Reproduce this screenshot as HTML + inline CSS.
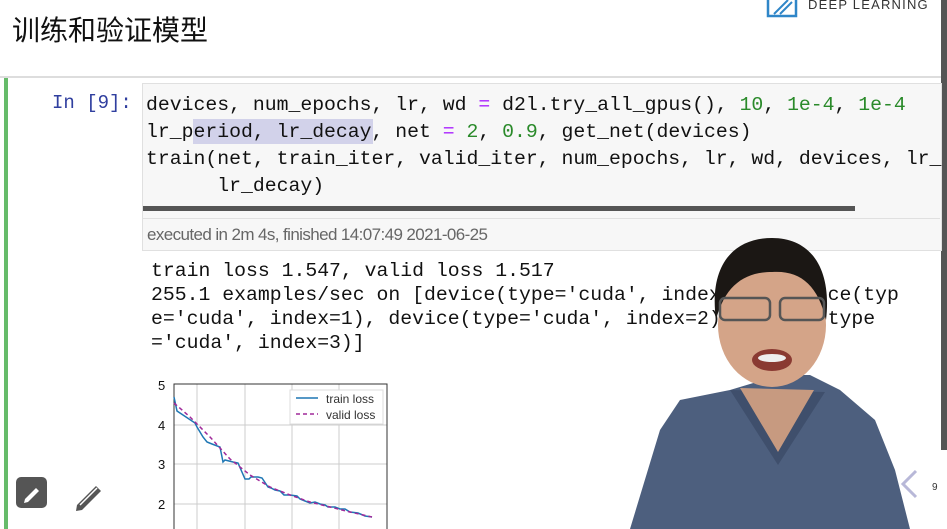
<!DOCTYPE html>
<html><head><meta charset="utf-8"><style>
body{margin:0;width:947px;height:529px;overflow:hidden;background:#fff;position:relative;font-family:"Liberation Sans","Noto Sans CJK SC",sans-serif}
.a{position:absolute}
.mono{font-family:"Liberation Mono",monospace;white-space:pre}
.code{font-size:19.8px;color:#111;line-height:27px}
.g{color:#2a8a2a}.p{color:#aa22ff}
.out{font-size:19.8px;color:#111;line-height:24px}
</style></head><body>
<div class="a" style="left:12px;top:9px;font-size:28px;color:#111;font-family:'Noto Sans CJK SC',sans-serif">训练和验证模型</div>
<svg class="a" style="left:766px;top:0" width="34" height="18"><rect x="2" y="-2" width="28" height="18" fill="none" stroke="#2f86c8" stroke-width="2.5"/><path d="M8 14 L22 0 M14 14 L26 2" stroke="#2f86c8" stroke-width="2"/></svg>
<div class="a" style="left:808px;top:-3px;font-size:13px;letter-spacing:1.2px;color:#333">DEEP LEARNING</div>
<div class="a" style="left:0;top:76px;width:942px;height:2px;background:#ddd"></div>
<div class="a" style="left:4px;top:78px;width:4px;height:451px;background:#66bb6a"></div>
<div class="a" style="left:941px;top:0;width:6px;height:450px;background:#555"></div>
<div class="a mono" style="left:52px;top:92px;font-size:19px;color:#303f9f">In [9]:</div>
<div class="a" style="left:142px;top:83px;width:798px;height:166px;background:#f7f7f7;border:1px solid #e0e0e0"></div>
<div class="a" style="left:193px;top:119px;width:180px;height:25px;background:#d2d2ea"></div>
<div class="a mono code" style="left:146px;top:92px">devices, num_epochs, lr, wd <span class="p">=</span> d2l.try_all_gpus(), <span class="g">10</span>, <span class="g">1e-4</span>, <span class="g">1e-4</span>
lr_period, lr_decay, net <span class="p">=</span> <span class="g">2</span>, <span class="g">0.9</span>, get_net(devices)
train(net, train_iter, valid_iter, num_epochs, lr, wd, devices, lr_
      lr_decay)</div>
<div class="a" style="left:143px;top:206px;width:712px;height:5px;background:#555"></div>
<div class="a" style="left:143px;top:218px;width:797px;height:1px;background:#e0e0e0"></div>
<div class="a" style="left:147px;top:225px;font-size:17px;color:#666;letter-spacing:-0.6px">executed in 2m 4s, finished 14:07:49 2021-06-25</div>
<div class="a mono out" style="left:151px;top:259px">train loss 1.547, valid loss 1.517
255.1 examples/sec on [device(type='cuda', index=0), device(typ
e='cuda', index=1), device(type='cuda', index=2), device(type
='cuda', index=3)]</div>
<svg class="a" style="left:150px;top:375px" width="250" height="154" font-family="Liberation Sans" font-size="13">
<g stroke="#ccc" stroke-width="1"><line x1="47" y1="9" x2="47" y2="154"/><line x1="95" y1="9" x2="95" y2="154"/><line x1="142" y1="9" x2="142" y2="154"/><line x1="189" y1="9" x2="189" y2="154"/>
<line x1="24" y1="50" x2="237" y2="50"/><line x1="24" y1="89" x2="237" y2="89"/><line x1="24" y1="129" x2="237" y2="129"/></g>
<rect x="24" y="9" width="213" height="150" fill="none" stroke="#333"/>
<g fill="#111"><text x="8" y="15">5</text><text x="8" y="55">4</text><text x="8" y="94">3</text><text x="8" y="134">2</text></g>
<rect x="140" y="15" width="93" height="34" fill="#fff" stroke="#ddd"/>
<line x1="146" y1="23" x2="168" y2="23" stroke="#1f77b4" stroke-width="1.5"/><line x1="146" y1="39" x2="168" y2="39" stroke="#a02a9a" stroke-width="1.5" stroke-dasharray="4 3"/>
<text x="176" y="28" font-size="12" fill="#333">train loss</text><text x="176" y="44" font-size="12" fill="#333">valid loss</text>
<path d="M24 22 L27 36 L33 40 L45 48 L47 52 L53 62 L57 67 L62 69 L70 72 L73 87 L75 85 L83 87 L88 88 L95 104 L99 104 L101 102 L108 102 L112 103 L118 112 L121 113 L125 115 L130 116 L134 120 L140 120 L147 121 L150 124 L155 126 L160 128 L165 127 L170 129 L175 130 L178 132 L185 132 L190 134 L195 134 L200 137 L208 138 L215 141 L222 142" fill="none" stroke="#1f77b4" stroke-width="1.5"/>
<path d="M24 28 L40 42 L60 62 L80 84 L100 100 L120 112 L140 120 L160 127 L180 132 L200 137 L222 142" fill="none" stroke="#a02a9a" stroke-width="1.5" stroke-dasharray="4 3"/>
</svg>
<div class="a" style="left:16px;top:477px;width:31px;height:31px;background:#555;border-radius:5px"></div>
<svg class="a" style="left:16px;top:477px" width="31" height="31"><path d="M9 22 L20 11 L23 14 L12 25 L8 26 Z" fill="#fff"/></svg>
<svg class="a" style="left:72px;top:477px" width="34" height="34"><path d="M5 28 L24 9 L29 14 L10 33 L4 34 Z" fill="#555"/><path d="M8 28 L25 11" stroke="#fff" stroke-width="1.5"/></svg>
<svg class="a" style="left:620px;top:230px" width="327" height="299">
<path d="M10 299 L40 200 L60 170 L110 160 L160 145 L190 145 L220 160 L255 190 L275 240 L290 299 Z" fill="#4d5f7e"/>
<path d="M110 160 L158 235 L205 162 Z" fill="#3f4f6c"/>
<path d="M120 158 L158 222 L194 160 Z" fill="#c79a80"/>
<ellipse cx="152" cy="95" rx="54" ry="62" fill="#d4a488"/>
<path d="M96 90 C88 30 118 8 152 8 C192 8 212 40 206 90 C198 55 180 40 152 42 C125 42 105 55 96 90 Z" fill="#1b1714"/>
<rect x="100" y="68" width="50" height="22" rx="5" fill="none" stroke="#555" stroke-width="2.5"/><rect x="160" y="68" width="44" height="22" rx="5" fill="none" stroke="#555" stroke-width="2.5"/>
<ellipse cx="152" cy="130" rx="20" ry="11" fill="#8a3a32"/><ellipse cx="152" cy="128" rx="14" ry="4" fill="#eee"/>
</svg>
<svg class="a" style="left:898px;top:468px" width="22" height="32"><path d="M18 3 L5 16 L18 29" fill="none" stroke="#b8b8d8" stroke-width="3"/></svg>
<div class="a" style="left:932px;top:482px;font-size:10px;color:#333">9</div>
</body></html>
